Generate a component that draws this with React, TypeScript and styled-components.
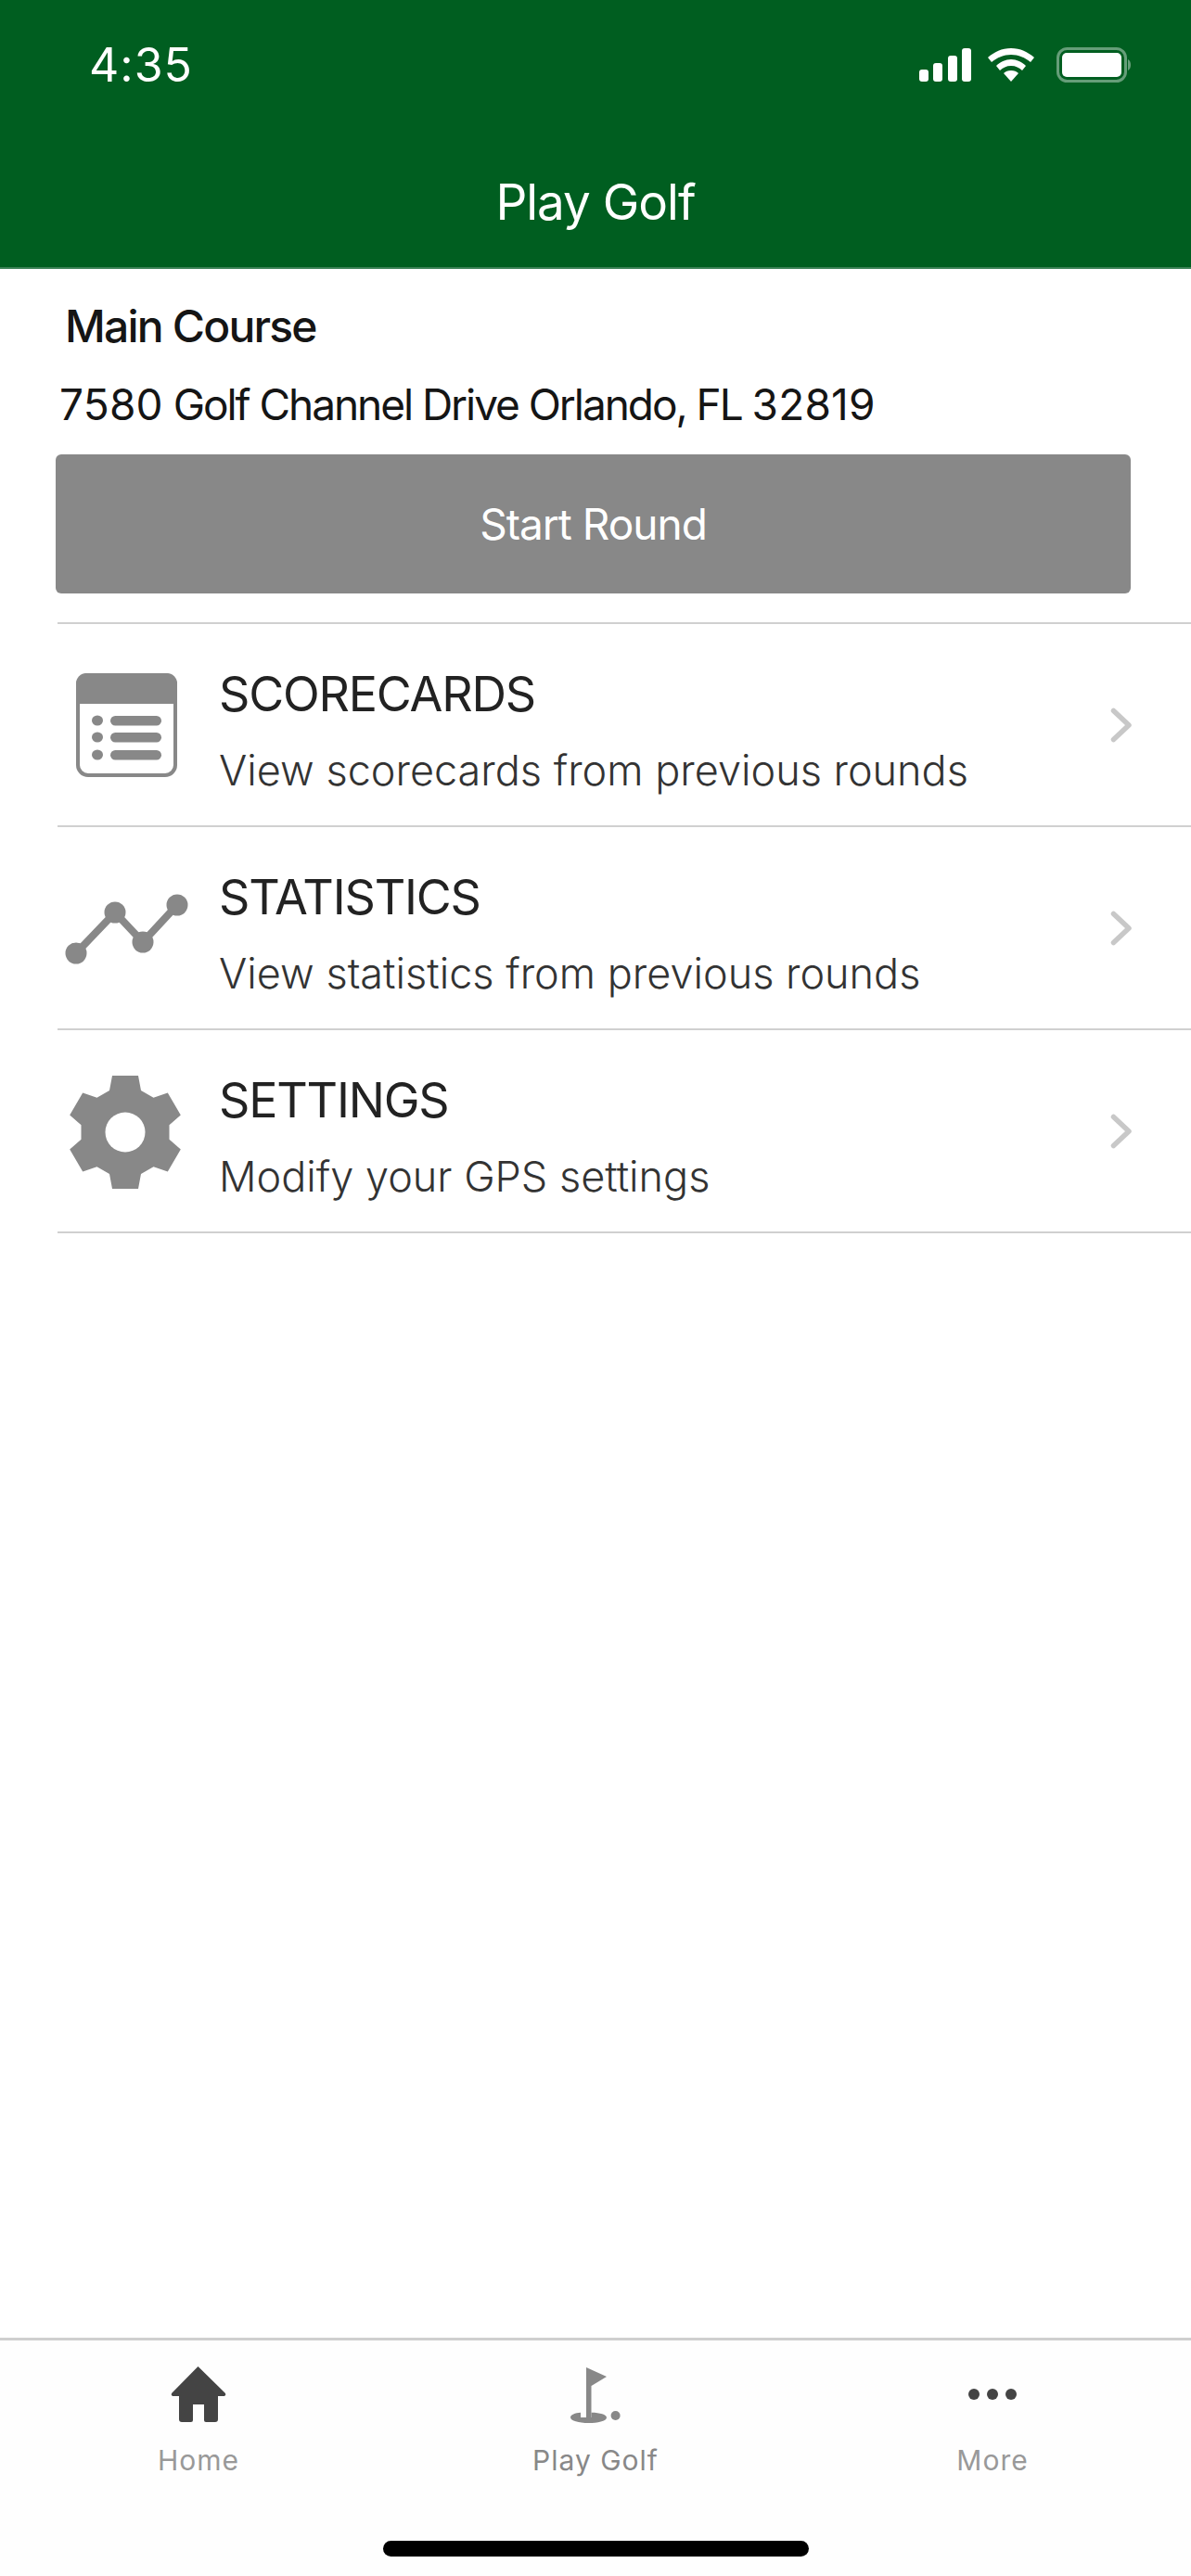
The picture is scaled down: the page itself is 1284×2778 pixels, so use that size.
import React from "react";
import styled, { createGlobalStyle } from "styled-components";

const Global = createGlobalStyle`
  html, body { margin: 0; padding: 0; background: #fff; }
  body { font-family: Inter, "Liberation Sans", sans-serif; }
`;

const Page = styled.div`
  width: 1284px;
  height: 2778px;
  display: flex;
  flex-direction: column;
  background: #fff;
  overflow: hidden;
`;

const Header = styled.header`
  height: 288px;
  background: #005e20;
  border-bottom: 2px solid #3a8055;
  display: flex;
  flex-direction: column;
  flex: none;
`;

const StatusBar = styled.div`
  height: 140px;
  padding: 0 65px 0 96px;
  display: flex;
  align-items: center;
  justify-content: space-between;
`;

const Time = styled.span`
  color: #fff;
  font-size: 50px;
  font-weight: 400;
  line-height: 1;
  letter-spacing: 1px;
`;

const StatusIcons = styled.div`
  display: flex;
  align-items: center;
  gap: 24px;
`;

const SignalGroup = styled.div`
  display: flex;
  align-items: center;
  gap: 18px;
`;

const NavTitle = styled.h1`
  margin: 0;
  color: #fff;
  font-size: 53px;
  font-weight: 400;
  line-height: 1;
  text-align: center;
  letter-spacing: -1px;
  padding-top: 52px;
`;

const Content = styled.main`
  flex: 1;
  display: flex;
  flex-direction: column;
`;

const CourseName = styled.div`
  margin: 32px 0 0 70px;
  font-size: 48px;
  font-weight: 500;
  line-height: 60px;
  letter-spacing: -1.8px;
  color: #151515;
`;

const Address = styled.div`
  margin: 25px 0 0 64px;
  font-size: 46px;
  font-weight: 400;
  line-height: 58px;
  letter-spacing: -2.05px;
  color: #151515;
`;

const Digits = styled.span`
  letter-spacing: 0.2px;
`;

const StartButton = styled.button`
  display: block;
  margin: 25px 0 0 60px;
  width: 1159px;
  height: 150px;
  border: none;
  border-radius: 6px;
  background: #888;
  color: #fff;
  font-family: inherit;
  font-size: 46px;
  font-weight: 400;
  letter-spacing: -1px;
`;

const List = styled.div`
  margin: 31px 0 0 62px;
  border-top: 2px solid #d0d0d0;
`;

const Row = styled.div`
  height: 217px;
  border-bottom: 2px solid #d0d0d0;
  display: flex;
  align-items: center;
`;

const IconSlot = styled.div`
  flex: none;
  width: 174px;
  padding-left: 8px;
  box-sizing: border-box;
  display: flex;
`;

const RowText = styled.div`
  flex: 1;
  display: flex;
  flex-direction: column;
  gap: 22px;
  padding-top: 16px;
`;

const RowTitle = styled.div`
  font-size: 52px;
  font-weight: 400;
  line-height: 60px;
  letter-spacing: -1.2px;
  color: #222;
`;

const RowSub = styled.div`
  font-size: 45px;
  font-weight: 300;
  line-height: 60px;
  letter-spacing: 0;
  color: #333;
`;

const Chevron = styled.svg`
  flex: none;
  margin-right: 62px;
  display: block;
`;

const TabBar = styled.nav`
  flex: none;
  height: 254px;
  border-top: 3px solid #cfcfcf;
  background: #fefefe;
  display: flex;
  flex-direction: column;
`;

const Tabs = styled.div`
  display: grid;
  grid-template-columns: repeat(3, 1fr);
  height: 216px;
`;

const Tab = styled.div`
  display: flex;
  flex-direction: column;
  align-items: center;
  padding-top: 28px;
`;

const TabIcon = styled.svg`
  display: block;
  overflow: visible;
`;

const TabLabel = styled.span<{ $active?: boolean }>`
  margin-top: 23px;
  font-size: 30px;
  line-height: 36px;
  letter-spacing: 1px;
  color: ${(p) => (p.$active ? "#888" : "#999")};
`;

const HomeIndicator = styled.div`
  width: 459px;
  height: 17px;
  margin: 0 auto;
  border-radius: 9px;
  background: #000;
`;

const gearPath = (() => {
  const cx = 65, cy = 66, R = 61, r = 46;
  const pts: string[] = [];
  for (let i = 0; i < 6; i++) {
    const a = (i * Math.PI) / 3;
    const p = (x: number, y: number) => {
      const X = cx + x * Math.cos(a) - y * Math.sin(a);
      const Y = cy + x * Math.sin(a) + y * Math.cos(a);
      pts.push(`${X.toFixed(1)} ${Y.toFixed(1)}`);
    };
    p(-17, -r + 1);
    p(-14, -R);
    p(14, -R);
    p(17, -r + 1);
  }
  return `M${pts.join("L")}Z`;
})();

const ScorecardIcon = () => (
  <svg width="135" height="130" viewBox="0 0 135 130" fill="#888">
    <rect x="14" y="11" width="105" height="108" rx="11" fill="#fff" stroke="#888" strokeWidth="4" />
    <path d="M12 42V20a11 11 0 0 1 11-11h87a11 11 0 0 1 11 11v22z" />
    <ellipse cx="35" cy="60" rx="6" ry="5.5" />
    <ellipse cx="35" cy="78" rx="6" ry="5.5" />
    <ellipse cx="35" cy="97" rx="6" ry="5.5" />
    <rect x="49" y="55" width="55" height="10.5" rx="5.25" />
    <rect x="49" y="73" width="55" height="10.5" rx="5.25" />
    <rect x="49" y="92" width="55" height="10.5" rx="5.25" />
  </svg>
);

const StatsIcon = () => (
  <svg width="135" height="130" viewBox="0 0 135 130" fill="#888">
    <path d="M12 92L54 48L84 80L121 40" fill="none" stroke="#888" strokeWidth="8" />
    <circle cx="12" cy="92" r="11.5" />
    <circle cx="54" cy="48" r="11.5" />
    <circle cx="84" cy="80" r="11.5" />
    <circle cx="121" cy="40" r="11.5" />
  </svg>
);

const GearIcon = () => (
  <svg width="135" height="130" viewBox="0 0 135 130">
    <path d={gearPath} fill="#888" />
    <circle cx="65" cy="66" r="21.5" fill="#fff" />
  </svg>
);

const ChevronIcon = () => (
  <Chevron width="26" height="38" viewBox="0 0 26 38" fill="none">
    <path
      d="M4.500 3.500L21 19L4.500 34.500"
      stroke="#c8c8c8"
      strokeWidth="5.500"
      strokeLinecap="round"
      strokeLinejoin="round"
    />
  </Chevron>
);

const rows = [
  { title: "SCORECARDS", sub: "View scorecards from previous rounds", Icon: ScorecardIcon },
  { title: "STATISTICS", sub: "View statistics from previous rounds", Icon: StatsIcon },
  { title: "SETTINGS", sub: "Modify your GPS settings", Icon: GearIcon },
];

export default function App() {
  return (
    <Page>
      <Global />
      <Header>
        <StatusBar>
          <Time>4:35</Time>
          <StatusIcons>
            <SignalGroup>
              <svg width="56" height="36" viewBox="0 0 56 36" fill="#fff">
                <rect x="0" y="23" width="10" height="13" rx="3" />
                <rect x="15" y="16" width="10" height="20" rx="3" />
                <rect x="31" y="8" width="10" height="28" rx="3" />
                <rect x="46" y="0" width="10" height="36" rx="3" />
              </svg>
              <svg width="50" height="36" viewBox="0 0 50 36" fill="#fff">
                <path d="M25 0c10 0 18 4 25 10l-4 5C40 10 33 7 25 7S10 10 4 15L0 10C7 4 15 0 25 0z" />
                <path d="M25 12c6 0 12 3 16 7l-4 5c-3-3-7-5-12-5s-9 2-12 5L9 19c4-4 10-7 16-7z" />
                <path d="M25 24c3.500 0 6 1 8 3l-8 9-8-9c2-2 4.500-3 8-3z" />
              </svg>
            </SignalGroup>
            <svg width="80" height="38" viewBox="0 0 80 38" fill="none">
              <rect x="1.500" y="1.500" width="73" height="35" rx="10" stroke="#fff" strokeOpacity="0.4" strokeWidth="3" />
              <rect x="6" y="6" width="64" height="26" rx="5" fill="#fff" />
              <path d="M77 13c2 1 3 3 3 6s-1 5-3 6z" fill="#fff" fillOpacity="0.4" />
            </svg>
          </StatusIcons>
        </StatusBar>
        <NavTitle>Play Golf</NavTitle>
      </Header>
      <Content>
        <CourseName>Main Course</CourseName>
        <Address>
          <Digits>7580</Digits> Golf Channel Drive Orlando, FL <Digits>32819</Digits>
        </Address>
        <StartButton>Start Round</StartButton>
        <List>
          {rows.map(({ title, sub, Icon }) => (
            <Row key={title}>
              <IconSlot>
                <Icon />
              </IconSlot>
              <RowText>
                <RowTitle>{title}</RowTitle>
                <RowSub>{sub}</RowSub>
              </RowText>
              <ChevronIcon />
            </Row>
          ))}
        </List>
      </Content>
      <TabBar>
        <Tabs>
          <Tab>
            <TabIcon width="60" height="60" viewBox="0 0 60 60" fill="#444">
              <path d="M29.500 0L59 29q1 2-1 3H51v25q0 3-3 3H38q-2 0-2-2V41H24v17q0 2-2 2H12q-3 0-3-3V32H2q-2-1-1-3z" />
            </TabIcon>
            <TabLabel>Home</TabLabel>
          </Tab>
          <Tab>
            <TabIcon width="60" height="60" viewBox="0 0 60 60" fill="#888">
              <path d="M20 1L42 11L25.500 21V55H20z" />
              <path d="M14 49.700V55H25.500V49.700C35 49.700 42 52 42 55C42 59 32 61 22.500 61C12 61 3 58.500 3 55C3 52 8 50 14 49.700z" />
              <circle cx="51.600" cy="53" r="5" />
            </TabIcon>
            <TabLabel $active>Play Golf</TabLabel>
          </Tab>
          <Tab>
            <TabIcon width="60" height="60" viewBox="0 0 60 60" fill="#444">
              <circle cx="10" cy="30" r="6" />
              <circle cx="30" cy="30" r="6" />
              <circle cx="50" cy="30" r="6" />
            </TabIcon>
            <TabLabel>More</TabLabel>
          </Tab>
        </Tabs>
        <HomeIndicator />
      </TabBar>
    </Page>
  );
}
